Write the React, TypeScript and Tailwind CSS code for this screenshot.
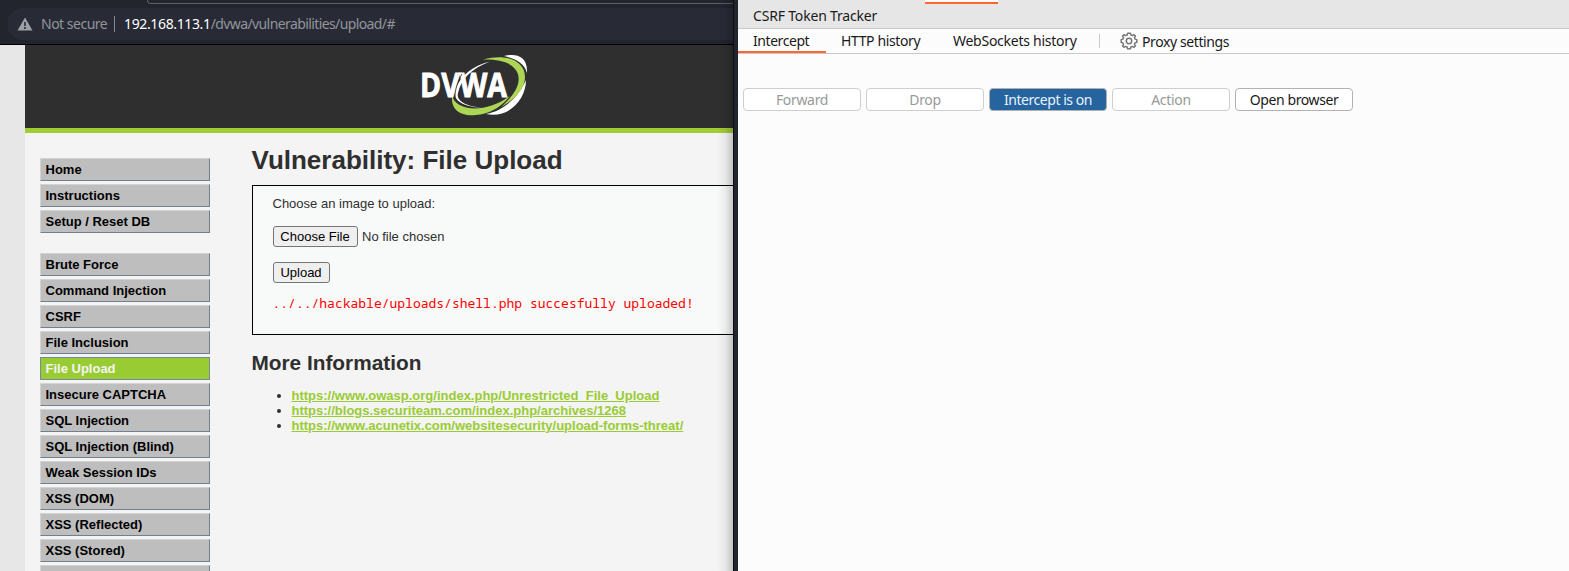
import React from "react";

const mainMenu = ["Home", "Instructions", "Setup / Reset DB"];
const vulnerabilities = [
  "Brute Force",
  "Command Injection",
  "CSRF",
  "File Inclusion",
  "File Upload",
  "Insecure CAPTCHA",
  "SQL Injection",
  "SQL Injection (Blind)",
  "Weak Session IDs",
  "XSS (DOM)",
  "XSS (Reflected)",
  "XSS (Stored)",
  "",
];
const links = [
  "https://www.owasp.org/index.php/Unrestricted_File_Upload",
  "https://blogs.securiteam.com/index.php/archives/1268",
  "https://www.acunetix.com/websitesecurity/upload-forms-threat/",
];

function MenuItem({ label }: { label: string }) {
  const look =
    label === "File Upload"
      ? "border-[#778899] bg-[#99cc33] text-[#f4f4f4]"
      : "border-t-[#d3d3d3] border-l-[#d3d3d3] border-r-[#708090] border-b-[#708090] bg-[#bebebe] text-black";
  return (
    <li className={`h-[23px] w-[170px] shrink-0 border pl-[4.5px] text-[13px] font-bold leading-[22px] ${look}`}>
      {label}
    </li>
  );
}

function Logo() {
  return (
    <svg width="112" height="66" viewBox="0 0 112 66" className="ml-[395px] mt-[7px] shrink-0">
      <path d="M70 9.500C53 14 42 22 36 36C32 46 38 54 62 56C46 54 36 49 38 41C41 27 52 16 70 9.500Z" fill="#fff" />
      <path d="M84 4C96 1 108 4 107 21C104 11 96 7 84 4Z" fill="#fff" />
      <path d="M106 28C106 48 88 67 66 62C84 59 98 45 106 28Z" fill="#fff" />
      <path d="M63 7.500C87 1 105 9 105 25C105 37 94 48 81 55C93 44 101 34 98 22C94 11 81 7 63 7.500Z" fill="#acd653" />
      <path d="M32 43C34 57 62 64 90 44C76 62 58 64 47 63C36 61 31 55 32 43Z" fill="#acd653" />
      <text
        x="0"
        y="45"
        textLength="87"
        lengthAdjust="spacingAndGlyphs"
        fontFamily="Open Sans, Noto Sans, sans-serif"
        fontSize="34"
        fontWeight="700"
        fill="#fff"
        stroke="#fff"
        strokeWidth="0.9"
      >
        DVWA
      </text>
      <path d="M42 22C38 29 35 37 35 45" stroke="#2f2f2f" strokeWidth="0.8" fill="none" />
    </svg>
  );
}

function AddressBar() {
  return (
    <div className="flex h-[45px] shrink-0 flex-col border-b border-black bg-[#22242e]">
      <div className="ml-[147px] h-1 shrink-0 rounded-bl-[6px] border-b border-l border-[#5d5f69]" />
      <div className="ml-[7px] mt-1 flex h-8 items-center rounded-l-full bg-[#282a36] font-['Noto_Sans'] text-[14px] text-[#92959b]">
        <svg width="16" height="14" viewBox="0 0 16 14" className="ml-[10px] shrink-0">
          <path d="M8 .5L15.500 13.500H.5Z" fill="#9da0a6" />
          <path d="M8 5V9M8 10V12" stroke="#282a36" strokeWidth="1.600" />
        </svg>
        <span className="mb-0.5 ml-2 w-[66px] whitespace-nowrap tracking-[-0.5px]">Not secure</span>
        <span className="ml-[7px] h-4 w-px bg-[#85878e]" />
        <span className="mb-0.5 ml-[9px] whitespace-nowrap">
          <span className="tracking-[-0.36px] text-white">192.168.113.1</span>
          <span className="tracking-[-0.6px]">/dvwa/vulnerabilities/upload/#</span>
        </span>
      </div>
    </div>
  );
}

function Page() {
  return (
    <div className="flex min-h-0 flex-1 bg-[#e7e7e7] pl-[25px] font-['Liberation_Sans'] text-[#2f2f2f]">
      <div className="flex min-w-0 flex-1 flex-col bg-[#f4f4f4]">
        <header className="flex h-[88px] shrink-0 border-b-[5px] border-[#a1cc33] bg-[#2f2f2f]">
          <Logo />
        </header>
        <div className="flex min-h-0 flex-1">
          <nav className="ml-[15px] mt-[25px] flex w-[170px] shrink-0 flex-col gap-5">
            <ul className="flex flex-col gap-[3px]">
              {mainMenu.map((m) => <MenuItem key={m} label={m} />)}
            </ul>
            <ul className="flex flex-col gap-[3px]">
              {vulnerabilities.map((m) => <MenuItem key={m} label={m} />)}
            </ul>
          </nav>
          <main className="ml-[41.500px] min-w-0 flex-1 whitespace-nowrap text-[13px] leading-[15px]">
            <h1 className="mt-3 h-[30px] text-[26px] font-bold leading-[30px]">Vulnerability: File Upload</h1>
            <section className="mt-[10px] h-[150px] border-y border-l border-black bg-[#f8fafa] pl-5 pt-[10px]">
              <p>Choose an image to upload:</p>
              <div className="mt-[15px] flex items-center gap-[4.5px]">
                <button className="h-[21px] w-[85px] rounded-[3px] border border-[#767676] bg-[#efefef] text-[13px] leading-[19px] text-black">
                  Choose File
                </button>
                <span>No file chosen</span>
              </div>
              <button className="mt-[15px] block h-[21px] w-[57px] rounded-[3px] border border-[#767676] bg-[#efefef] text-[13px] leading-[19px] text-black">
                Upload
              </button>
              <pre className="mt-[13px] font-['Noto_Sans_Mono','DejaVu_Sans_Mono'] text-[13px] leading-[15px] text-[#ff0000]">
                ../../hackable/uploads/shell.php succesfully uploaded!
              </pre>
            </section>
            <h2 className="mt-4 h-6 text-[20.800px] font-bold leading-6">More Information</h2>
            <ul className="mt-[13px] list-disc pl-10 font-bold">
              {links.map((l) => (
                <li key={l}>
                  <a className="text-[#99cc33] underline">{l}</a>
                </li>
              ))}
            </ul>
          </main>
        </div>
      </div>
    </div>
  );
}

function Gear() {
  return (
    <svg width="18" height="18" viewBox="0 0 18 18" fill="none" stroke="#777" strokeWidth="1.500" strokeLinejoin="round">
      <path d="M7.600 1.200H10.400L10.900 3L12.400 3.600L14 2.700L15.400 4.100L14.500 5.700L15.100 7.100L16.800 7.600V10.400L15.100 10.900L14.500 12.300L15.400 13.900L14 15.300L12.400 14.400L10.900 15L10.400 16.800H7.600L7.100 15L5.600 14.400L4 15.300L2.600 13.900L3.500 12.300L2.900 10.900L1.200 10.400V7.600L2.900 7.100L3.500 5.700L2.600 4.100L4 2.700L5.600 3.600L7.100 3Z" />
      <circle cx="9" cy="9" r="2.700" />
    </svg>
  );
}

const buttonBase = "h-[23px] w-[118px] rounded-[4px] border text-center leading-[22px]";

function ProxyWindow() {
  return (
    <div className="flex min-w-0 flex-1 flex-col whitespace-nowrap bg-[#fcfcfc] font-['Noto_Sans'] text-[14px] tracking-[-0.33px] text-[#1a1a1a]">
      <div className="flex h-[29px] shrink-0 flex-col border-b border-[#c8caca] bg-[#e6e6e6]">
        <div className="ml-[187px] h-1 w-[73px] shrink-0 border-b-2 border-[#ff6633] bg-[#fcfcfc]" />
        <span className="ml-[15px] mt-0.5 leading-5 tracking-[-0.18px]">CSRF Token Tracker</span>
      </div>
      <div className="flex h-[25px] shrink-0 border-b border-[#c8caca] leading-6">
        <div className="h-6 w-[88px] border-b-2 border-[#ff6633] pl-[15px] tracking-[-0.44px]">Intercept</div>
        <div className="w-[112px] pl-[15px] tracking-[-0.38px]">HTTP history</div>
        <div className="w-[161px] pl-[15px] tracking-[-0.26px]">WebSockets history</div>
        <div className="mt-[5px] h-[14px] w-px bg-[#c8caca]" />
        <div className="ml-5 mt-[3px] h-[18px] w-[18px]"><Gear /></div>
        <div className="ml-1 pt-px tracking-[-0.4px]">Proxy settings</div>
      </div>
      <div className="ml-[5px] mt-[34px] flex gap-[5px]">
        <div className={`${buttonBase} border-[#cecece] bg-white text-[#999999]`}>Forward</div>
        <div className={`${buttonBase} border-[#cecece] bg-white text-[#999999]`}>Drop</div>
        <div className={`${buttonBase} border-[#b0b0b0] bg-[#25649f] tracking-[-0.45px] text-[#eaf2fa]`}>Intercept is on</div>
        <div className={`${buttonBase} border-[#cecece] bg-white text-[#999999]`}>Action</div>
        <div className={`${buttonBase} border-[#b5b0b2] bg-white tracking-[-0.4px]`}>Open browser</div>
      </div>
    </div>
  );
}

export default function App() {
  return (
    <div className="flex h-[571px] w-[1569px] overflow-hidden">
      <div className="relative flex w-[733px] shrink-0 flex-col overflow-hidden">
        <AddressBar />
        <Page />
        <div className="absolute inset-y-0 right-0 w-4 bg-linear-to-r from-transparent via-black/5 to-black/20" />
      </div>
      <div className="w-[5px] shrink-0 border-l border-[#0c0d12] bg-[#22242e]" />
      <ProxyWindow />
    </div>
  );
}
